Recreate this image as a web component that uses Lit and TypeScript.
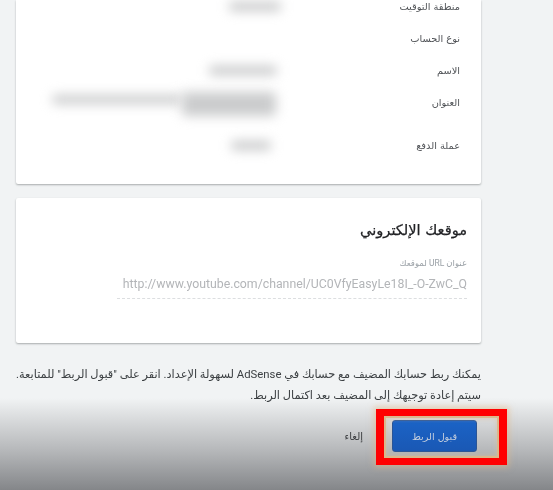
import { LitElement, html, css } from "lit";
import { customElement } from "lit/decorators.js";

@customElement("app-root")
export class AppRoot extends LitElement {
  static styles = css`
    :host { display: block; width: 553px; height: 490px; overflow: hidden; font-family: "Liberation Sans", "DejaVu Sans", sans-serif; }
    .page { position: relative; height: 490px; overflow: hidden; background: #f1f3f4; box-sizing: border-box; padding-left: 16px; width: 553px; display: flex; flex-direction: column; filter: blur(0.35px); }
    .col { width: 465px; display: flex; flex-direction: column; }
    .card { background: #fff; box-shadow: 0 1px 2px rgba(60,64,67,.4); border-radius: 2px; box-sizing: border-box; }
    .info { height: 184px; padding: 0 21px 0 0; display: flex; flex-direction: column; border-radius: 0 0 2px 2px; }
    .row { display: grid; grid-template-columns: 1fr 180px; align-items: center; }
    .r1 { height: 12px; }
    .r2 { height: 31px; margin-top: 11px; }
    .r3 { height: 32px; }
    .r4 { height: 32px; }
    .r5 { height: 54px; }
    .label { direction: rtl; text-align: right; font-size: 9.8px; color: #505357; grid-column: 2; grid-row: 1; font-family: "DejaVu Sans", sans-serif; }
    .val { grid-column: 1; grid-row: 1; display: flex; justify-content: flex-end; align-items: flex-start; }
    .blur { height: 9px; background: #c6c7c8; filter: blur(6px); border-radius: 4px; }
    .b1 { width: 52px; margin-right: -1px; }
    .b3 { width: 68px; margin-right: 3px; }
    .b5 { width: 40px; margin-right: 9px; }
    .b4a { width: 130px; margin-top: 6px; background: #c9cacb; }
    .b4b { width: 94px; height: 24px; margin-top: 3px; margin-right: 4px; background: #cbcccd; }
    .site { height: 145px; margin-top: 14px; padding: 22px 14px 0 14px; direction: rtl; display: flex; flex-direction: column; }
    h2 { margin: 0; font-size: 14.6px; line-height: 20px; font-weight: 500; color: #202124; font-family: "DejaVu Sans", sans-serif; -webkit-text-stroke: 0.25px #202124; }
    .sub { margin-top: 17px; font-size: 8.5px; line-height: 12px; color: #9aa0a6; font-family: Roboto, "DejaVu Sans", sans-serif; }
    .url { margin-top: 5px; font-size: 12.3px; line-height: 20px; color: #b3b5b8; font-family: Roboto, sans-serif; direction: ltr; text-align: right; white-space: nowrap; }
    .line { margin-top: 4px; width: 350px; border-bottom: 1px dashed #dcdee0; }
    .note { margin: 21px 0 0; direction: rtl; font-size: 11.33px; line-height: 21px; color: #3c4043; font-family: Roboto, "DejaVu Sans", sans-serif; white-space: nowrap; }
    .actions { display: flex; direction: rtl; align-items: center; gap: 29px; margin-top: 14px; padding-right: 4px; }
    .primary { position: relative; z-index: 2; width: 85px; height: 32px; border: 1px solid #2a5596; box-sizing: border-box; border-radius: 3px; background: linear-gradient(to bottom, #1b63c6, #1a58b4); color: #c6d0de; font-size: 9.6px; font-family: "DejaVu Sans", sans-serif; padding: 0; }
    .cancel { font-size: 10px; color: #2c2e30; font-family: "DejaVu Sans", sans-serif; }
    .shade { position: absolute; left: 0; right: 0; top: 398px; bottom: 0; background: linear-gradient(to bottom, rgba(90,92,96,0) 0%, rgba(90,92,96,.17) 24%, rgba(90,92,96,.4) 58%, rgba(90,92,96,.72) 100%); pointer-events: none; }
    .frame { position: absolute; left: 376px; top: 409px; width: 131px; height: 56px; box-sizing: border-box; border: solid #f00; border-width: 7px 8px; box-shadow: 0 0 6px 2px rgba(230,180,125,.55), inset 0 0 0 2px rgba(218,182,138,.95), inset 0 0 4px 3px rgba(225,190,150,.5); pointer-events: none; z-index: 3; }
  `;
  render() {
    return html`<div class="page">
      <div class="col">
        <section class="card info">
          <div class="row r1"><div class="val"><div class="blur b1"></div></div><div class="label">منطقة التوقيت</div></div>
          <div class="row r2"><div class="label">نوع الحساب</div></div>
          <div class="row r3"><div class="val"><div class="blur b3"></div></div><div class="label">الاسم</div></div>
          <div class="row r4"><div class="val"><div class="blur b4a"></div><div class="blur b4b"></div></div><div class="label">العنوان</div></div>
          <div class="row r5"><div class="val"><div class="blur b5"></div></div><div class="label">عملة الدفع</div></div>
        </section>
        <section class="card site">
          <h2>موقعك الإلكتروني</h2>
          <div class="sub">عنوان URL لموقعك</div>
          <div class="url">http://www.youtube.com/channel/UC0VfyEasyLe18I_-O-ZwC_Q</div>
          <div class="line"></div>
        </section>
        <p class="note">يمكنك ربط حسابك المضيف مع حسابك في AdSense لسهولة الإعداد. انقر على "قبول الربط" للمتابعة.<br>سيتم إعادة توجيهك إلى المضيف بعد اكتمال الربط.</p>
        <div class="actions"><button class="primary">قبول الربط</button><span class="cancel">إلغاء</span></div>
      </div>
      <div class="shade"></div>
      <div class="frame"></div>
    </div>`;
  }
}
